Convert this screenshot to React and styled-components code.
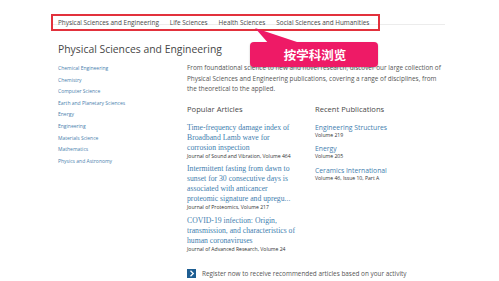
import React from 'react'
import styled, { createGlobalStyle } from 'styled-components'

const GlobalStyle = createGlobalStyle`
  html, body {
    margin: 0;
    padding: 0;
    background: #fff;
  }
  body {
    font-family: 'Open Sans', 'Noto Sans', sans-serif;
    color: #505050;
  }
`

const subjects = [
  'Chemical Engineering',
  'Chemistry',
  'Computer Science',
  'Earth and Planetary Sciences',
  'Energy',
  'Engineering',
  'Materials Science',
  'Mathematics',
  'Physics and Astronomy',
]

const articles = [
  {
    title: 'Time-frequency damage index of Broadband Lamb wave for corrosion inspection',
    source: 'Journal of Sound and Vibration, Volume 464',
  },
  {
    title: 'Intermittent fasting from dawn to sunset for 30 consecutive days is associated with anticancer proteomic signature and upregu...',
    source: 'Journal of Proteomics, Volume 217',
  },
  {
    title: 'COVID-19 infection: Origin, transmission, and characteristics of human coronaviruses',
    source: 'Journal of Advanced Research, Volume 24',
  },
]

const publications = [
  { name: 'Engineering Structures', volume: 'Volume 219' },
  { name: 'Energy', volume: 'Volume 205' },
  { name: 'Ceramics International', volume: 'Volume 46, Issue 10, Part A' },
]

const App = () => {
  return (
    <Page>
      <GlobalStyle />
      <NavRow>
        <NavHighlight>
          <NavLink>Physical Sciences and Engineering</NavLink>
          <NavLink>Life Sciences</NavLink>
          <NavLink>Health Sciences</NavLink>
          <NavLink>Social Sciences and Humanities</NavLink>
        </NavHighlight>
      </NavRow>
      <Content>
        <Heading>Physical Sciences and Engineering</Heading>
        <Columns>
          <SubjectList>
            {subjects.map((s) => (
              <li key={s}>{s}</li>
            ))}
          </SubjectList>
          <Main>
            <Intro>
              From foundational science to new and novel research, discover our large collection of
              Physical Sciences and Engineering publications, covering a range of disciplines, from
              the theoretical to the applied.
            </Intro>
            <Lists>
              <div>
                <SectionTitle>Popular Articles</SectionTitle>
                {articles.map((a) => (
                  <Article key={a.title}>
                    <ArticleTitle>{a.title}</ArticleTitle>
                    <Source>{a.source}</Source>
                  </Article>
                ))}
              </div>
              <div>
                <SectionTitle>Recent Publications</SectionTitle>
                {publications.map((p) => (
                  <Publication key={p.name}>
                    <PubName>{p.name}</PubName>
                    <Source>{p.volume}</Source>
                  </Publication>
                ))}
              </div>
            </Lists>
            <Register>
              <ArrowBox>
                <svg width='6' height='7' viewBox='0 0 6 7'>
                  <path d='M1.5 0.8 L4.3 3.5 L1.5 6.2' fill='none' stroke='#fff' strokeWidth='1.3' />
                </svg>
              </ArrowBox>
              Register now to receive recommended articles based on your activity
            </Register>
          </Main>
        </Columns>
      </Content>
      <Callout>
        <CalloutTail viewBox='0 0 50 16' width='50' height='16'>
          <path d='M0 0 L48 16 L14 16 Z' fill='#ee1a66' />
        </CalloutTail>
        按学科浏览
      </Callout>
    </Page>
  )
}

const Page = styled.div`
  position: relative;
  width: 499px;
  height: 281px;
  overflow: hidden;
  padding: 8px 0 0 51px;
  box-sizing: border-box;
`

const NavRow = styled.div`
  width: 394px;
  border-bottom: 1px solid #ececec;
  height: 16px;
`

const NavHighlight = styled.div`
  display: inline-flex;
  align-items: center;
  gap: 11px;
  height: 17px;
  box-sizing: border-box;
  padding: 0 9px 0 5px;
  border: 2px solid #e2313c;
`

const NavLink = styled.span`
  font-size: 6.4px;
  color: #4a4a4a;
  white-space: nowrap;
`

const Content = styled.div`
  padding: 16px 0 0 7px;
`

const Heading = styled.h1`
  margin: 0;
  font-size: 10.4px;
  font-weight: 400;
  color: #474747;
  line-height: 16px;
`

const Columns = styled.div`
  display: grid;
  grid-template-columns: 129px 260px;
  margin-top: 6px;
`

const SubjectList = styled.ul`
  list-style: none;
  margin: 0;
  padding: 0;
  li {
    font-size: 5px;
    color: #4b7fae;
    line-height: 11.6px;
    white-space: nowrap;
  }
`

const Main = styled.div`
  display: flex;
  flex-direction: column;
`

const Intro = styled.p`
  margin: 0;
  width: 255px;
  font-size: 6.4px;
  line-height: 10.5px;
  color: #555;
`

const Lists = styled.div`
  display: grid;
  grid-template-columns: 128px 130px;
  margin-top: 8px;
`

const SectionTitle = styled.h2`
  margin: 0 0 8px;
  font-size: 7.6px;
  font-weight: 400;
  color: #4a4a4a;
  line-height: 12px;
`

const Article = styled.div`
  margin-bottom: 4.5px;
`

const ArticleTitle = styled.div`
  font-family: 'Liberation Serif', 'DejaVu Serif', serif;
  font-size: 7.7px;
  line-height: 10px;
  color: #3f80af;
  width: 113px;
`

const Source = styled.div`
  font-size: 5.1px;
  line-height: 7px;
  color: #333;
  white-space: nowrap;
`

const Publication = styled.div`
  margin-bottom: 5.5px;
`

const PubName = styled.div`
  font-size: 6.8px;
  line-height: 9px;
  color: #3f80af;
  white-space: nowrap;
`

const Register = styled.div`
  display: flex;
  align-items: center;
  gap: 6px;
  margin-top: 12px;
  font-size: 6.4px;
  color: #555;
  white-space: nowrap;
`

const ArrowBox = styled.span`
  display: inline-flex;
  align-items: center;
  justify-content: center;
  width: 9px;
  height: 9px;
  background: #1e5e92;
`

const Callout = styled.div`
  position: absolute;
  left: 250px;
  top: 42px;
  width: 128px;
  height: 25px;
  border-radius: 4px;
  background: #ee1a66;
  box-shadow: 0 1px 2px rgba(0, 0, 0, 0.25);
  color: #fff;
  font-family: 'Noto Sans CJK SC', sans-serif;
  font-weight: 700;
  font-size: 12.5px;
  display: flex;
  align-items: center;
  justify-content: center;
  padding-left: 2px;
  box-sizing: border-box;
`

const CalloutTail = styled.svg`
  position: absolute;
  left: 5px;
  top: -14px;
`

export default App
